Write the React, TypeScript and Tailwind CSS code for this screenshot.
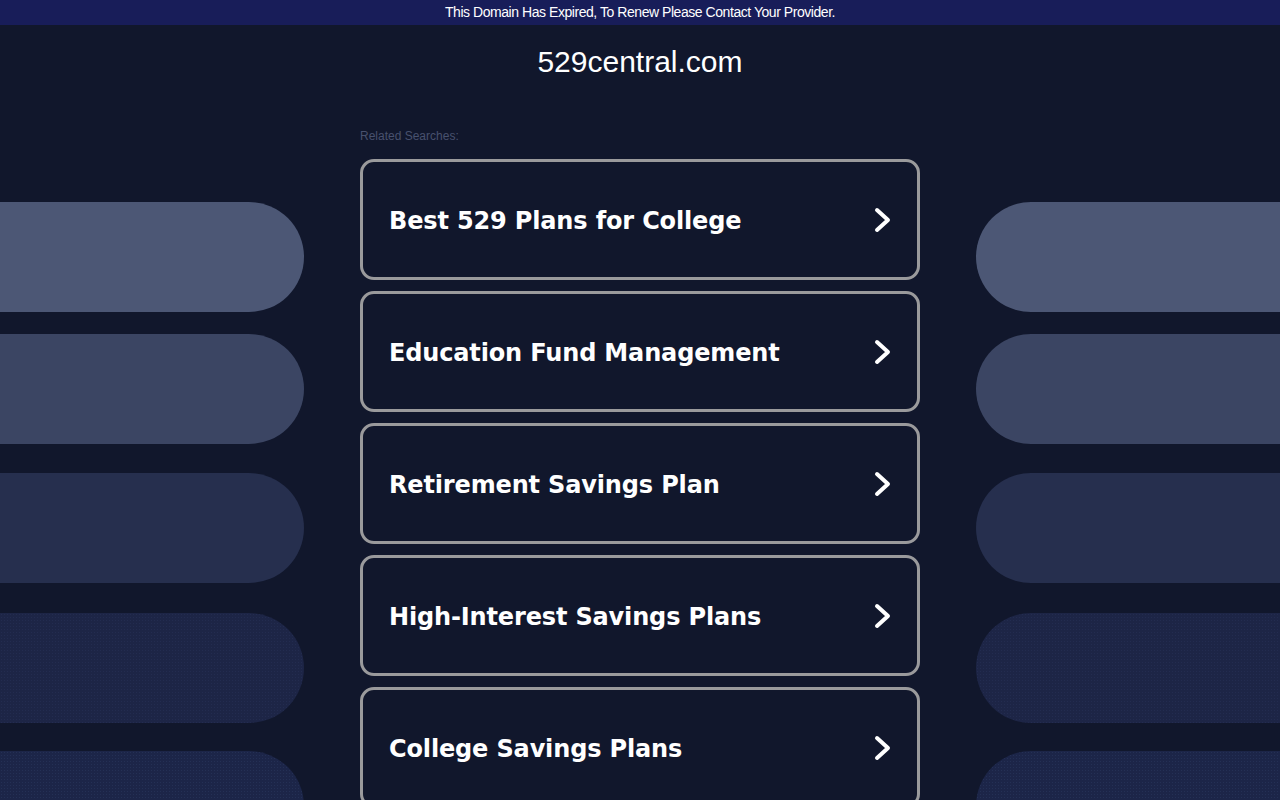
const SEARCHES = [
  'Best 529 Plans for College',
  'Education Fund Management',
  'Retirement Savings Plan',
  'High-Interest Savings Plans',
  'College Savings Plans',
]

// decorative side pills, tops measured from the page
const PILLS = [
  { mt: 'mt-[177px]', bg: 'bg-[#4c5775]' },
  { mt: 'mt-[22px]', bg: 'bg-[#3b4563]' },
  { mt: 'mt-[29px]', bg: 'bg-[#262f4e]' },
  { mt: 'mt-[30px]', bg: 'bg-[#1d2546] bg-[radial-gradient(circle,#232c50_0.6px,transparent_0.8px)] bg-[length:3px_3px]' },
  { mt: 'mt-[28px]', bg: 'bg-[#1c2548] bg-[radial-gradient(circle,#243055_0.6px,transparent_0.8px)] bg-[length:3px_3px]' },
]

const Chevron = () => (
  <svg width="17" height="26" viewBox="0 0 17 26" fill="none">
    <path d="M3 3 L14 13 L3 23" stroke="#fff" strokeWidth="4" strokeLinecap="round" strokeLinejoin="round" />
  </svg>
)

const PillColumn = ({ side }: { side: 'left' | 'right' }) => (
  <div className="flex flex-col">
    {PILLS.map((p, i) => (
      <div
        key={i}
        className={`${p.mt} ${p.bg} h-[110px] w-full shrink-0 ${side === 'left' ? 'rounded-r-full' : 'rounded-l-full'}`}
      />
    ))}
  </div>
)

const App = () => {
  return (
    <div className="min-h-screen bg-[#11172c] font-['Liberation_Sans',Arial,sans-serif] overflow-hidden">
      <div className="h-[25px] bg-[#181d59] flex items-center justify-center">
        <p className="text-white text-[14px] tracking-[-0.45px] leading-[25px]">
          This Domain Has Expired, To Renew Please Contact Your Provider.
        </p>
      </div>

      <div className="grid grid-cols-[304px_560px_304px] gap-x-[56px]">
        <PillColumn side="left" />

        <div className="flex flex-col">
          <h1 className="mt-[19px] text-center text-white text-[30px] leading-[36px] font-normal">529central.com</h1>
          <p className="mt-[49px] text-[12px] leading-[14px] text-[#48516e]">Related Searches:</p>

          <div className="mt-[16px] flex flex-col gap-[11px]">
            {SEARCHES.map(s => (
              <a
                key={s}
                href="#"
                className="h-[121px] border-[3px] border-[#9a9a9c] rounded-[14px] flex items-center justify-between pl-[26px] pr-[26px]"
              >
                <span className="pt-[3px] text-white text-[24px] font-bold tracking-[-0.15px] font-['DejaVu_Sans',Verdana,sans-serif]">{s}</span>
                <Chevron />
              </a>
            ))}
          </div>
        </div>

        <PillColumn side="right" />
      </div>
    </div>
  )
}

export default App
